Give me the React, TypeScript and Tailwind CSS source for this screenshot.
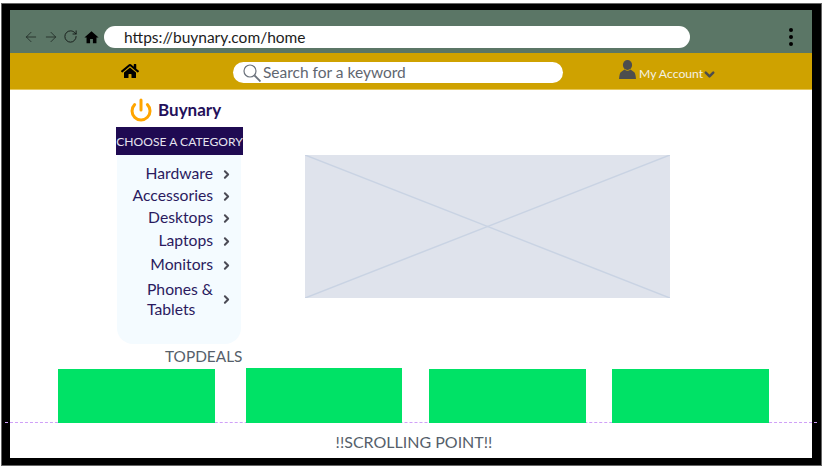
import { ArrowLeft, ArrowRight, ChevronDown, ChevronRight, Power, RotateCw } from 'lucide-react'
import { FaHome } from 'react-icons/fa'
import { MdHome } from 'react-icons/md'

const categories = [
  { label: 'Hardware', className: 'h-[22px]' },
  { label: 'Accessories', className: 'h-[22px]' },
  { label: 'Desktops', className: 'h-[22px]' },
  { label: 'Laptops', className: 'h-[24px]' },
  { label: 'Monitors', className: 'h-[24px]' },
]

function CategoryRow({ label, className }: { label: string; className: string }) {
  return (
    <li className={`flex items-center justify-end pr-[8px] ${className}`}>
      <span className="text-[15.7px] leading-none text-[#2a1a5e]">{label}</span>
      <ChevronRight className="ml-[7px] w-[13px] h-[13px] text-[#4b4b55]" strokeWidth={3.75} />
    </li>
  )
}

export default function App() {
  return (
    <div className="w-[822px] h-[469px] bg-white overflow-hidden font-['Lato','Open_Sans',sans-serif]">
      <div className="ml-[2px] mt-[4px] w-[819px] h-[461px] border-l-[8px] border-r-[9px] border-t-[6px] border-b-[7px] border-black ring-1 ring-[#666666] bg-white flex flex-col">
        {/* browser chrome */}
        <div className="h-[43px] bg-[#5b7666] flex items-start pt-[16px] pl-[13px] shrink-0">
          <ArrowLeft className="w-[16px] h-[16px] mt-[3px] text-[#1f2a25]" strokeWidth={1.25} />
          <ArrowRight className="w-[16px] h-[16px] mt-[3px] ml-[4px] text-[#1f2a25]" strokeWidth={1.25} />
          <RotateCw className="w-[15px] h-[15px] mt-[3px] ml-[4px] text-[#141a17]" strokeWidth={1.5} />
          <MdHome className="w-[17px] h-[17px] mt-[3px] ml-[5px] text-black" />
          <div className="ml-[4px] w-[586px] h-[22px] bg-white rounded-full pl-[20px] pt-[1px] flex items-center text-[15.5px] text-[#1c1c1c]">
            https://buynary.com/home
          </div>
          <div className="ml-[99px] mt-[2px] flex flex-col gap-[3px]">
            <span className="w-[4px] h-[4px] rounded-full bg-black" />
            <span className="w-[4px] h-[4px] rounded-full bg-black" />
            <span className="w-[4px] h-[4px] rounded-full bg-black" />
          </div>
        </div>

        {/* site nav */}
        <div className="h-[37px] bg-[#cfa200] border-b border-[#e6c75a] flex items-center shrink-0">
          <FaHome className="ml-[111px] w-[18px] h-[16px] text-black" />
          <div className="ml-[94px] mt-[2px] w-[330px] h-[21px] bg-white rounded-full flex items-center pl-[10px] pt-[1px] text-[15.5px] text-[#5f6670]">
            <svg className="w-[18px] h-[18px] mr-[2px]" viewBox="0 0 18 18" fill="none" stroke="#6b727c" strokeWidth="1.2">
              <circle cx="7" cy="7" r="6" />
              <line x1="11.5" y1="11.5" x2="17.5" y2="17.5" strokeWidth="1.8" />
            </svg>
            Search for a keyword
          </div>
          <svg className="ml-[56px] mb-[3px] w-[17px] h-[19px] text-[#4d4d4d]" viewBox="0 0 17 19" fill="currentColor">
            <ellipse cx="8.5" cy="5" rx="4.6" ry="5" />
            <path d="M5.5 9.5 L2 12 Q0.5 13 0 19 L17 19 Q16.5 13 15 12 L11.5 9.5 Q8.5 12 5.5 9.5Z" />
          </svg>
          <span className="ml-[3px] mt-[7px] text-[12.2px] text-[#f4f1e3]">My Account</span>
          <ChevronDown className="mt-[7px] -ml-[1px] w-[15px] h-[15px] text-[#4d4d4d]" strokeWidth={4} />
        </div>

        {/* main */}
        <div className="flex-1 flex flex-col min-h-0">
          <div className="flex">
            <div className="ml-[106px] w-[127px] shrink-0">
              <div className="h-[37px] flex items-center pl-[13px] pt-[2px]">
                <Power className="w-[24px] h-[24px] text-[#ffa500]" strokeWidth={3} />
                <span className="ml-[5px] text-[17px] font-bold text-[#24105a]">Buynary</span>
              </div>
              <div className="h-[28px] bg-[#1f0a52] flex items-center justify-center pt-[2px] text-[12.1px] text-[#e6e4ef] whitespace-nowrap">
                CHOOSE A CATEGORY
              </div>
              <ul className="ml-[1px] w-[124px] h-[189px] bg-[#f4fbff] rounded-b-[16px] pt-[8px]">
                {categories.map((c) => (
                  <CategoryRow key={c.label} label={c.label} className={c.className} />
                ))}
                <li className="mt-[2px] flex items-center pl-[30px]">
                  <span className="w-[68px] text-[15.7px] leading-[20px] text-[#2a1a5e]">Phones &amp; Tablets</span>
                  <ChevronRight className="ml-[5px] w-[13px] h-[13px] text-[#4b4b55]" strokeWidth={3.75} />
                </li>
              </ul>
            </div>
            <div className="ml-[62px] mt-[65px] w-[365px] h-[143px] bg-[#dfe3ec]">
              <svg className="w-full h-full" viewBox="0 0 365 143" preserveAspectRatio="none">
                <line x1="0" y1="0" x2="365" y2="143" stroke="#c9d3e3" strokeWidth="1.5" />
                <line x1="365" y1="0" x2="0" y2="143" stroke="#c9d3e3" strokeWidth="1.5" />
              </svg>
            </div>
          </div>

          <div className="ml-[155px] mt-[2px] h-[22px] text-[15.4px] leading-[21px] text-[#565f6b]">TOPDEALS</div>

          <div className="relative z-10 flex items-end h-[55px] pl-[48px]">
            <div className="w-[157px] h-[54px] bg-[#00e266]" />
            <div className="ml-[31px] w-[156px] h-[55px] bg-[#00e266]" />
            <div className="ml-[27px] w-[157px] h-[54px] bg-[#00e266]" />
            <div className="ml-[26px] w-[157px] h-[54px] bg-[#00e266]" />
          </div>

          <div className="relative flex-1 flex items-center justify-center text-[16px] text-[#565f6b] pt-[3px] pl-[6px]">
            <div className="absolute -left-[5px] -right-[5px] -top-[1px] border-t border-dashed border-[#d0a0f8]" />
            !!SCROLLING POINT!!
          </div>
        </div>
      </div>
    </div>
  )
}
